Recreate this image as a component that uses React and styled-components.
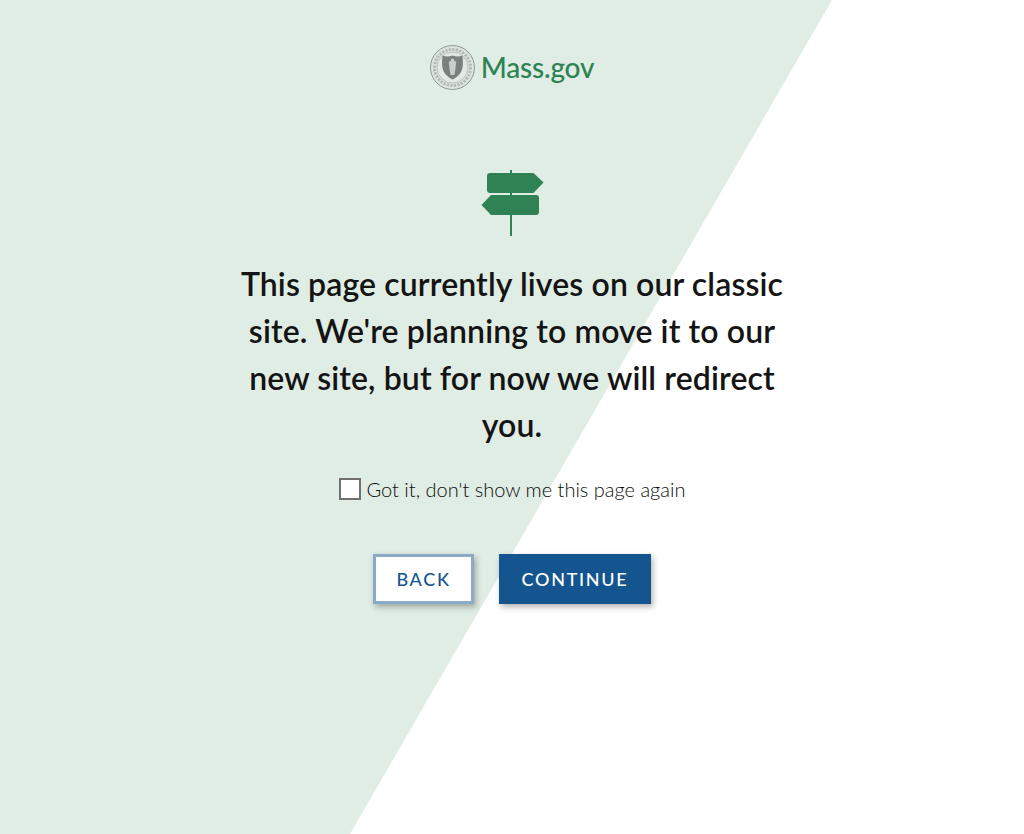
import React from "react";
import styled, { createGlobalStyle } from "styled-components";

const Global = createGlobalStyle`
  html, body {
    margin: 0;
    padding: 0;
    background: #fff;
    font-family: "Lato", "Open Sans", sans-serif;
    color: #141414;
  }
`;

const Page = styled.main`
  position: relative;
  height: 834px;
  overflow: hidden;
  display: flex;
  flex-direction: column;
  align-items: center;
  &::before {
    content: "";
    position: absolute;
    inset: 0;
    background: #e0ede4;
    clip-path: polygon(0 0, 832px 0, 350px 834px, 0 834px);
  }
`;

const Content = styled.div`
  position: relative;
  display: flex;
  flex-direction: column;
  align-items: center;
  width: 560px;
  padding-top: 45px;
`;

const Logo = styled.div`
  display: flex;
  align-items: center;
  gap: 6px;
  height: 45px;
`;

const LogoText = styled.span`
  font-size: 28px;
  font-weight: 500;
  line-height: 45px;
  color: #2e8254;
  letter-spacing: -0.2px;
`;

const SignWrap = styled.div`
  margin-top: 79px;
  height: 68px;
  svg {
    display: block;
  }
`;

const Heading = styled.h1`
  margin: 23px 0 0;
  font-size: 32px;
  line-height: 47px;
  font-weight: 600;
  letter-spacing: 0.12px;
  text-align: center;
  color: #141414;
`;

const CheckRow = styled.label`
  display: flex;
  align-items: center;
  gap: 6px;
  margin-top: 26px;
  font-size: 20px;
  font-weight: 300;
  line-height: 30px;
  color: #0c0c0c;
`;

const Box = styled.input`
  appearance: none;
  box-sizing: border-box;
  width: 22px;
  height: 22px;
  margin: 0;
  background: #fff;
  border: 2px solid #707070;
`;

const Buttons = styled.div`
  display: flex;
  gap: 25px;
  margin-top: 50px;
`;

const Button = styled.button`
  box-sizing: border-box;
  height: 50px;
  width: ${p => p.$width}px;
  font-family: inherit;
  font-size: 18px;
  font-weight: 500;
  letter-spacing: 1.7px;
  text-transform: uppercase;
  color: ${p => (p.$primary ? "#fff" : "#14558f")};
  background: ${p => (p.$primary ? "#14558f" : "#fff")};
  border: ${p => (p.$primary ? "none" : "3px solid #8aaac7")};
  box-shadow: 2px 3px 6px rgba(0, 0, 0, 0.3);
  padding: 0;
`;

const Seal = () => (
  <svg width="45" height="45" viewBox="0 0 45 45" aria-hidden="true">
    <circle cx="22.500" cy="22.500" r="22" fill="#dde5e0" stroke="#8f9793" strokeWidth="1" />
    <circle cx="22.500" cy="22.500" r="18" fill="none" stroke="#b3bab6" strokeWidth="3" strokeDasharray="2.200 1.300" />
    <circle cx="22.500" cy="22.500" r="15.500" fill="#e2e9e4" stroke="#a0a7a3" strokeWidth="0.600" />
    <path d="M12.500 10.500c3.300 1.200 6.700 1.200 10 0 3.300 1.200 6.700 1.200 10 0 .8 7.500.5 12.300-1.200 16-1.700 3.400-5 6-8.800 8-3.800-2-7.100-4.600-8.800-8-1.700-3.700-2-8.500-1.200-16z" fill="#7a807d" />
    <path d="M22.500 13.500c1.300 0 1.800 1 1.700 2.200l2 1.200-.8 7.300-1 5.800h-3.800l-1-5.800-.8-7.300 2-1.200c-.1-1.200.4-2.200 1.700-2.200z" fill="#c8cfcb" />
  </svg>
);

const SignPost = () => (
  <svg width="64" height="68" viewBox="0 0 64 68" aria-hidden="true">
    <path d="M30 1h2v66h-2z" fill="#2e8254" />
    <path d="M7 7a3 3 0 0 1 3-3h43.500l10 9.500-10 10.500h-43.500a3 3 0 0 1-3-3z" fill="#2e8254" />
    <path d="M11 26h45a3 3 0 0 1 3 3v14a3 3 0 0 1-3 3h-45l-9.500-10z" fill="#2e8254" />
  </svg>
);

const App = () => (
  <Page>
    <Global />
    <Content>
      <Logo>
        <Seal />
        <LogoText>Mass.gov</LogoText>
      </Logo>
      <SignWrap>
        <SignPost />
      </SignWrap>
      <Heading>
        This page currently lives on our classic site. We're planning to move it to our new site, but for now we will redirect you.
      </Heading>
      <CheckRow>
        <Box type="checkbox" />
        Got it, don't show me this page again
      </CheckRow>
      <Buttons>
        <Button $width={101}>Back</Button>
        <Button $primary $width={152}>Continue</Button>
      </Buttons>
    </Content>
  </Page>
);

export default App;
